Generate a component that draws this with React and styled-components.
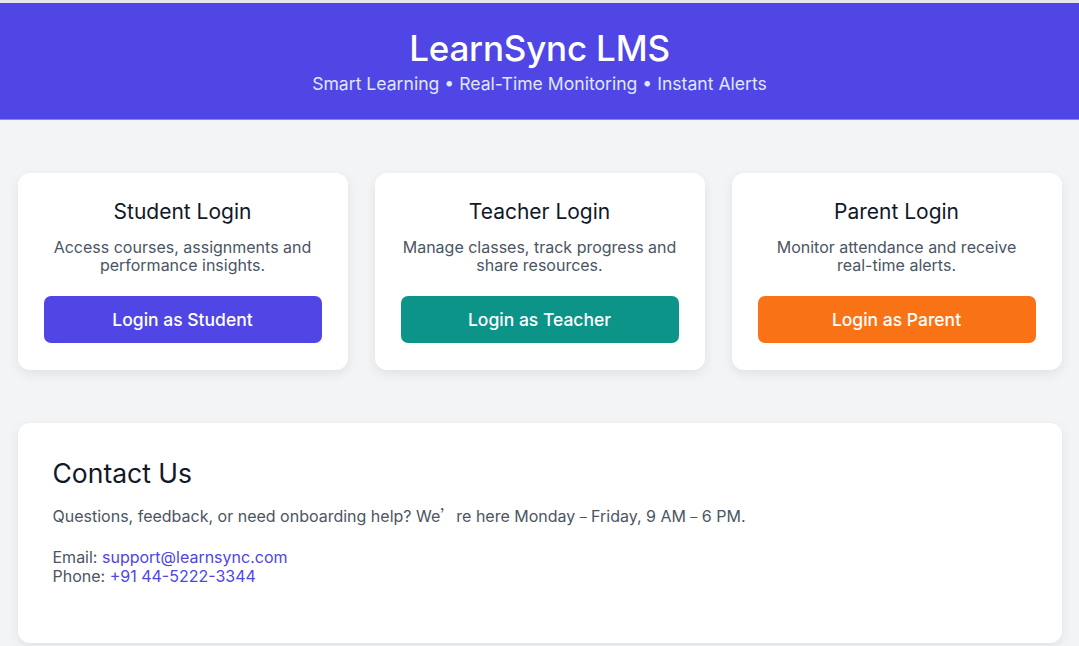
import React from "react";
import styled, { createGlobalStyle } from "styled-components";

const Global = createGlobalStyle`
  * { box-sizing: border-box; }
  html, body { margin: 0; padding: 0; }
  body {
    background: #f3f4f6;
    font-family: Inter, "Noto Sans", "Noto Sans CJK SC", sans-serif;
    color: #111827;
    border-top: 3px solid #e5e7eb;
  }
`;

const Header = styled.header`
  background: #4f46e5;
  color: #fff;
  text-align: center;
  padding: 24px 16px 23px;
  border-bottom: 1px solid #8b85f0;
`;

const Title = styled.h1`
  margin: 0;
  font-size: 35px;
  font-weight: 500;
  line-height: 42px;
  letter-spacing: -0.2px;
`;

const Subtitle = styled.p`
  margin: 3px 0 0;
  font-size: 17.6px;
  line-height: 24px;
  color: #e0e7ff;
`;

const Main = styled.main`
  padding: 53px 17.5px 0;
  display: flex;
  flex-direction: column;
  gap: 53px;
`;

const CardGrid = styled.section`
  display: grid;
  grid-template-columns: repeat(3, 1fr);
  gap: 27px;
`;

const Card = styled.div`
  background: #fff;
  border-radius: 12px;
  box-shadow: 0 4px 12px rgba(0, 0, 0, 0.08);
  padding: 26px 26px 27px;
  text-align: center;
  display: flex;
  flex-direction: column;
  align-items: stretch;
`;

const CardTitle = styled.h2`
  margin: 0;
  font-size: 21px;
  font-weight: 400;
  line-height: 26px;
  color: #111827;
`;

const CardText = styled.p`
  margin: 13px 0 22px;
  font-size: 16px;
  line-height: 18px;
  color: #4b5563;
  min-height: 36px;
`;

const LoginButton = styled.button`
  height: 47px;
  border: none;
  border-radius: 7px;
  background: ${(p) => p.$color};
  color: #fff;
  font-family: inherit;
  font-size: 17.5px;
  font-weight: 500;
  cursor: pointer;
`;

const ContactCard = styled.section`
  background: #fff;
  border-radius: 12px;
  box-shadow: 0 4px 12px rgba(0, 0, 0, 0.08);
  padding: 32px 35px 56px;
  margin-bottom: 4px;
`;

const ContactTitle = styled.h2`
  margin: 0;
  font-size: 26.5px;
  font-weight: 400;
  line-height: 36px;
  color: #111827;
`;

const ContactText = styled.p`
  margin: ${(p) => p.$mt || "15px"} 0 0;
  font-size: 16px;
  line-height: 19.5px;
  color: #4b5563;
`;

const Wide = styled.span`
  font-family: "Noto Sans CJK SC", sans-serif;
`;

const Link = styled.a`
  color: #4f46e5;
  text-decoration: none;
`;

const cards = [
  {
    title: "Student Login",
    text: "Access courses, assignments and performance insights.",
    button: "Login as Student",
    color: "#4f46e5",
  },
  {
    title: "Teacher Login",
    text: "Manage classes, track progress and share resources.",
    button: "Login as Teacher",
    color: "#0d9488",
  },
  {
    title: "Parent Login",
    text: "Monitor attendance and receive real-time alerts.",
    button: "Login as Parent",
    color: "#f97316",
  },
];

export default function App() {
  return (
    <>
      <Global />
      <Header>
        <Title>LearnSync LMS</Title>
        <Subtitle>Smart Learning • Real-Time Monitoring • Instant Alerts</Subtitle>
      </Header>
      <Main>
        <CardGrid>
          {cards.map((c) => (
            <Card key={c.title}>
              <CardTitle>{c.title}</CardTitle>
              <CardText>{c.text}</CardText>
              <LoginButton $color={c.color}>{c.button}</LoginButton>
            </Card>
          ))}
        </CardGrid>
        <ContactCard>
          <ContactTitle>Contact Us</ContactTitle>
          <ContactText>
            Questions, feedback, or need onboarding help? We<Wide>’</Wide>re here Monday
            <Wide> – </Wide>Friday, 9 AM<Wide> – </Wide>6 PM.
          </ContactText>
          <ContactText $mt="21px">
            Email: <Link href="#">support@learnsync.com</Link>
            <br />
            Phone: <Link href="#">+91 44-5222-3344</Link>
          </ContactText>
        </ContactCard>
      </Main>
    </>
  );
}
